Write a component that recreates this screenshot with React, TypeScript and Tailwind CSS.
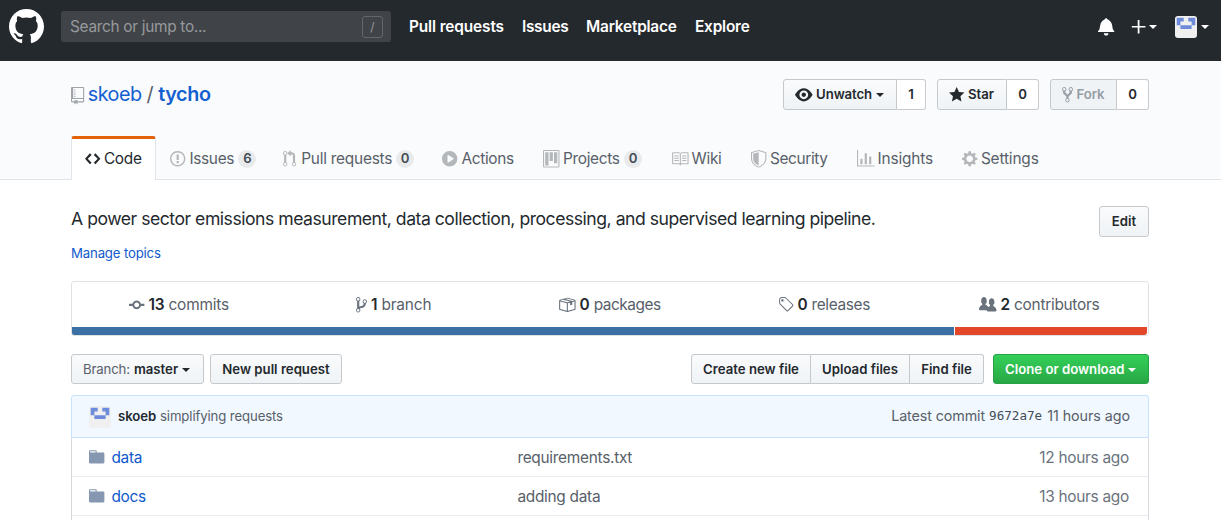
import type { ReactNode } from "react";

const ICONS = {
  mark: { w: 16, d: "M8 0C3.58 0 0 3.58 0 8c0 3.54 2.29 6.53 5.47 7.59.4.07.55-.17.55-.38 0-.19-.01-.82-.01-1.49-2.01.37-2.53-.49-2.69-.94-.09-.23-.48-.94-.82-1.13-.28-.15-.68-.52-.01-.53.63-.01 1.08.58 1.23.82.72 1.21 1.87.87 2.33.66.07-.52.28-.87.51-1.07-1.78-.2-3.64-.89-3.64-3.95 0-.87.31-1.59.82-2.15-.08-.2-.36-1.02.08-2.12 0 0 .67-.21 2.2.82.64-.18 1.32-.27 2-.27.68 0 1.36.09 2 .27 1.53-1.04 2.2-.82 2.2-.82.44 1.1.16 1.92.08 2.12.51.56.82 1.27.82 2.15 0 3.07-1.87 3.75-3.65 3.95.29.25.54.73.54 1.48 0 1.07-.01 1.93-.01 2.2 0 .21.15.46.55.38A8.013 8.013 0 0016 8c0-4.42-3.58-8-8-8z" },
  repo: { w: 12, d: "M4 9H3V8h1v1zm0-3H3v1h1V6zm0-2H3v1h1V4zm0-2H3v1h1V2zm8-1v12c0 .55-.45 1-1 1H6v2l-1.5-1.5L3 16v-2H1c-.55 0-1-.45-1-1V1c0-.55.45-1 1-1h10c.55 0 1 .45 1 1zm-1 10H1v2h2v-1h3v1h5v-2zm0-10H2v9h9V1z" },
  eye: { w: 16, d: "M8.06 2C3 2 0 8 0 8s3 6 8.06 6C13 14 16 8 16 8s-3-6-7.94-6zM8 12c-2.2 0-4-1.78-4-4 0-2.2 1.8-4 4-4 2.22 0 4 1.8 4 4 0 2.22-1.78 4-4 4zm2-4c0 1.11-.89 2-2 2-1.11 0-2-.89-2-2 0-1.11.89-2 2-2 1.11 0 2 .89 2 2z" },
  star: { w: 14, d: "M14 6l-4.9-.64L7 1 4.9 5.36 0 6l3.6 3.26L2.67 14 7 11.67 11.33 14l-.93-4.74L14 6z" },
  fork: { w: 10, d: "M8 1a1.993 1.993 0 00-1 3.72V6L5 8 3 6V4.72A1.993 1.993 0 002 1a1.993 1.993 0 00-1 3.72V6.5l3 3v1.78A1.993 1.993 0 005 15a1.993 1.993 0 001-3.72V9.5l3-3V4.72A1.993 1.993 0 008 1zM2 4.2C1.34 4.2.8 3.65.8 3c0-.65.55-1.2 1.2-1.2.65 0 1.2.55 1.2 1.2 0 .65-.55 1.2-1.2 1.2zm3 10c-.66 0-1.2-.55-1.2-1.2 0-.65.55-1.2 1.2-1.2.65 0 1.2.55 1.2 1.2 0 .65-.55 1.2-1.2 1.2zm3-10c-.66 0-1.2-.55-1.2-1.2 0-.65.55-1.2 1.2-1.2.65 0 1.2.55 1.2 1.2 0 .65-.55 1.2-1.2 1.2z" },
  code: { w: 14, d: "M9.5 3L8 4.5 11.5 8 8 11.5 9.5 13 14 8 9.5 3zm-5 0L0 8l4.5 5L6 11.5 2.5 8 6 4.5 4.5 3z" },
  issue: { w: 14, d: "M7 2.3c3.14 0 5.7 2.56 5.7 5.7s-2.56 5.7-5.7 5.7A5.71 5.71 0 011.3 8c0-3.14 2.56-5.7 5.7-5.7zM7 1C3.14 1 0 4.14 0 8s3.14 7 7 7 7-3.14 7-7-3.14-7-7-7zm1 3H6v5h2V4zm0 6H6v2h2v-2z" },
  pull: { w: 12, d: "M11 11.28V5c-.03-.78-.34-1.47-.94-2.06C9.46 2.35 8.78 2.03 8 2H7V0L4 3l3 3V4h1c.27.02.48.11.69.31.21.2.3.42.31.69v6.28A1.993 1.993 0 0010 15a1.993 1.993 0 001-3.72zm-1 2.92c-.66 0-1.2-.55-1.2-1.2 0-.65.55-1.2 1.2-1.2.65 0 1.2.55 1.2 1.2 0 .65-.55 1.2-1.2 1.2zM4 3c0-1.11-.89-2-2-2a1.993 1.993 0 00-1 3.72v6.56A1.993 1.993 0 002 15a1.993 1.993 0 001-3.72V4.72c.59-.34 1-.98 1-1.72zm-.8 10c0 .66-.55 1.2-1.2 1.2-.65 0-1.2-.55-1.2-1.2 0-.65.55-1.2 1.2-1.2.65 0 1.2.55 1.2 1.2zM2 4.2C1.34 4.2.8 3.65.8 3c0-.65.55-1.2 1.2-1.2.65 0 1.2.55 1.2 1.2 0 .65-.55 1.2-1.2 1.2z" },
  play: { w: 14, d: "M14 8A7 7 0 110 8a7 7 0 0114 0zm-8.223 3.482l4.599-3.066a.5.5 0 000-.832L5.777 4.518A.5.5 0 005 4.934v6.132a.5.5 0 00.777.416z" },
  project: { w: 15, d: "M10 12h3V2h-3v10zm-4-2h3V2H6v8zm-4 4h3V2H2v12zm-1 1h13V1H1v14zM14 0H1a1 1 0 00-1 1v14a1 1 0 001 1h13a1 1 0 001-1V1a1 1 0 00-1-1z" },
  book: { w: 16, d: "M3 5h4v1H3V5zm0 3h4V7H3v1zm0 2h4V9H3v1zm11-5h-4v1h4V5zm0 2h-4v1h4V7zm0 2h-4v1h4V9zm2-6v9c0 .55-.45 1-1 1H9.5l-1 1-1-1H2c-.55 0-1-.45-1-1V3c0-.55.45-1 1-1h5.5l1 1 1-1H15c.55 0 1 .45 1 1zm-8 .5L7.5 3H2v9h6V3.5zm7-.5H9.5l-.5.5V12h6V3z" },
  shield: { w: 14, d: "M0 2l7-2 7 2v6.02C14 12.69 8.69 16 7 16c-1.69 0-7-3.31-7-7.98V2zm1 .75L7 1l6 1.75v5.268C13 12.104 8.449 15 7 15c-1.449 0-6-2.896-6-6.982V2.75zm1 .75L7 2v12c-1.207 0-5-2.482-5-5.985V3.5z" },
  graph: { w: 16, d: "M16 14v1H0V0h1v14h15zM5 13H3V8h2v5zm4 0H7V3h2v10zm4 0h-2V6h2v7z" },
  gear: { w: 14, d: "M14 8.77v-1.6l-1.94-.64-.45-1.09.88-1.84-1.13-1.13-1.81.91-1.09-.45-.69-1.92h-1.6l-.63 1.94-1.11.45-1.84-.88-1.13 1.13.91 1.81-.45 1.09L0 7.23v1.59l1.94.64.45 1.09-.88 1.84 1.13 1.13 1.81-.91 1.09.45.69 1.92h1.59l.63-1.94 1.11-.45 1.84.88 1.13-1.13-.92-1.81.47-1.09L14 8.75v.02zM7 11c-1.66 0-3-1.34-3-3s1.34-3 3-3 3 1.34 3 3-1.34 3-3 3z" },
  commit: { w: 14, d: "M10.86 7c-.45-1.72-2-3-3.86-3-1.86 0-3.41 1.28-3.86 3H0v2h3.14c.45 1.72 2 3 3.86 3 1.86 0 3.41-1.28 3.86-3H14V7h-3.14zM7 10.2c-1.22 0-2.2-.98-2.2-2.2 0-1.22.98-2.2 2.2-2.2 1.22 0 2.2.98 2.2 2.2 0 1.22-.98 2.2-2.2 2.2z" },
  branch: { w: 10, d: "M10 5c0-1.11-.89-2-2-2a1.993 1.993 0 00-1 3.72v.3c-.02.52-.23.98-.63 1.38-.4.4-.86.61-1.38.63-.83.02-1.48.16-2 .45V4.72a1.993 1.993 0 00-1-3.72C.88 1 0 1.89 0 3a2 2 0 001 1.72v6.56c-.59.35-1 .99-1 1.72 0 1.11.89 2 2 2 1.11 0 2-.89 2-2 0-.53-.2-1-.53-1.36.09-.06.48-.41.59-.47.25-.11.56-.17.94-.17 1.05-.05 1.95-.45 2.75-1.25S8.95 7.77 9 6.73h-.02C9.59 6.37 10 5.73 10 5zM2 1.8c.66 0 1.2.55 1.2 1.2 0 .65-.55 1.2-1.2 1.2C1.35 4.2.8 3.65.8 3c0-.65.55-1.2 1.2-1.2zm0 12.41c-.66 0-1.2-.55-1.2-1.2 0-.65.55-1.2 1.2-1.2.65 0 1.2.55 1.2 1.2 0 .65-.55 1.2-1.2 1.2zm6-8c-.66 0-1.2-.55-1.2-1.2 0-.65.55-1.2 1.2-1.2.65 0 1.2.55 1.2 1.2 0 .65-.55 1.2-1.2 1.2z" },
  package: { w: 16, d: "M1 4.27v7.47c0 .45.3.84.75.97l6.5 1.73c.16.05.34.05.5 0l6.5-1.73c.45-.13.75-.52.75-.97V4.27c0-.45-.3-.84-.75-.97l-6.5-1.74a1.4 1.4 0 00-.5 0L1.75 3.3c-.45.13-.75.52-.75.97zm7 9.09l-6-1.59V5l6 1.61v6.75zM2 4l2.5-.67L11 5.06l-2.5.67L2 4zm13 7.77l-6 1.59V6.61l2-.55V8.5l2-.53V5.53L15 5v6.77zm-2-7.24L6.5 2.8l2-.53L15 4l-2 .53z" },
  tag: { w: 14, d: "M7.73 1.73C7.26 1.26 6.62 1 5.96 1H3.5C2.13 1 1 2.13 1 3.5v2.47c0 .66.27 1.3.73 1.77l6.06 6.06c.39.39 1.02.39 1.41 0l4.59-4.59a.996.996 0 000-1.41L7.73 1.73zM2.38 7.09c-.31-.3-.47-.7-.47-1.13V3.5c0-.88.72-1.59 1.59-1.59h2.47c.42 0 .83.16 1.13.47l6.14 6.13-4.73 4.73-6.13-6.15zM3.01 3h2v2H3V3h.01z" },
  people: { w: 16, d: "M16 12.999c0 .439-.45 1-1 1H7.995c-.539 0-.994-.447-.995-.999H1c-.54 0-1-.561-1-1 0-2.634 3-4 3-4s.229-.409 0-1c-.841-.621-1.058-.59-1-3 .058-2.419 1.367-3 2.5-3s2.442.58 2.5 3c.058 2.41-.159 2.379-1 3-.229.59 0 1 0 1s1.549.711 2.42 2.088C9.196 9.369 10 8.999 10 8.999s.229-.409 0-1c-.841-.62-1.058-.59-1-3 .058-2.419 1.367-3 2.5-3s2.437.581 2.495 3c.059 2.41-.158 2.38-1 3-.229.59 0 1 0 1s3.005 1.366 3.005 4z" },
  bell: { w: 14, d: "M14 12v1H0v-1l.73-.58c.77-.77.81-2.55 1.19-4.42C2.69 3.23 6 2 6 2c0-.55.45-1 1-1s1 .45 1 1c0 0 3.39 1.23 4.16 5 .38 1.88.42 3.66 1.19 4.42l.66.58H14zm-7 4c1.11 0 2-.89 2-2H5c0 1.11.89 2 2 2z" },
  plus: { w: 12, d: "M12.2 8.75H6.8v5.45H5.2V8.75H-.2v-1.5h5.4V1.8h1.6v5.45h5.4z" },
  folder: { w: 14, d: "M13 4H7V3c0-.66-.31-1-1-1H1c-.55 0-1 .45-1 1v10c0 .55.45 1 1 1h12c.55 0 1-.45 1-1V5c0-.55-.45-1-1-1zM6 4H1V3h5v1z" },
};

type IconName = keyof typeof ICONS;

function Icon({ name, size = 17.6, className = "" }: { name: IconName; size?: number; className?: string }) {
  const { w, d } = ICONS[name];
  return (
    <svg width={(w * size) / 16} height={size} viewBox={`0 0 ${w} 16`} fill="currentColor" className={`shrink-0 overflow-visible ${className}`} aria-hidden="true">
      <path fillRule="evenodd" d={d} />
    </svg>
  );
}

function Caret({ className = "" }: { className?: string }) {
  return <span className={`shrink-0 border-x-[4.4px] border-t-[4.4px] border-x-transparent border-t-current ${className}`} />;
}

function Avatar() {
  return (
    <svg width="22" height="22" viewBox="0 0 22 22" className="shrink-0 rounded-[3px]" aria-hidden="true">
      <path fill="#f0f0f0" d="M0 0h22v22H0z" />
      <path fill="#6e8bdb" d="M1.7 1.8h7v3.8H5.4v3.6H1.7zM13.3 1.8h7v7.4h-3.7V5.6h-3.3zM5.4 9.2h11.2v3.7H5.4z" />
    </svg>
  );
}

const BTN = "flex items-center whitespace-nowrap border border-[#c6c9cc] bg-gradient-to-b from-[#fafbfc] to-[#eff3f6] text-[13.2px] font-semibold";

function Social({ icon, label, count, width, countWidth, caret, disabled, tracking }: { icon: IconName; label: string; count: string; width: string; countWidth: string; caret?: boolean; disabled?: boolean; tracking: string }) {
  return (
    <div className="flex h-[31px]">
      <div className={`${BTN} rounded-l-[3px] pl-[11px] ${width} ${disabled ? "!bg-none !bg-[#eff3f6] text-[#959da5]" : ""}`}>
        <Icon name={icon} />
        <span className={`ml-[3.5px] ${tracking}`}>{label}</span>
        {caret && <Caret className="ml-[4px]" />}
      </div>
      <div className={`flex items-center justify-center rounded-r-[3px] border border-l-0 border-[#c9cbce] bg-white text-[13.2px] font-semibold ${countWidth}`}>{count}</div>
    </div>
  );
}

interface TabProps {
  icon: IconName;
  label: string;
  count?: string;
  width: string;
  gap: string;
  tracking: string;
  textWidth?: string;
}

const TABS: TabProps[] = [
  { icon: "issue", label: "Issues", count: "6", width: "w-[113px]", gap: "ml-[4px]", tracking: "tracking-[-0.3px]", textWidth: "w-[49px]" },
  { icon: "pull", label: "Pull requests", count: "0", width: "w-[159px]", gap: "ml-[5px]", tracking: "tracking-[-0.22px]", textWidth: "w-[95px]" },
  { icon: "play", label: "Actions", width: "w-[101px]", gap: "ml-[4px]", tracking: "tracking-[-0.3px]" },
  { icon: "project", label: "Projects", count: "0", width: "w-[128px]", gap: "ml-[3.5px]", tracking: "tracking-[-0.3px]", textWidth: "w-[61px]" },
  { icon: "book", label: "Wiki", width: "w-[80px]", gap: "ml-[3px]", tracking: "tracking-[-0.3px]" },
  { icon: "shield", label: "Security", width: "w-[106px]", gap: "ml-[3.5px]", tracking: "tracking-[-0.35px]" },
  { icon: "graph", label: "Insights", width: "w-[105px]", gap: "ml-[3px]", tracking: "tracking-[-0.15px]" },
  { icon: "gear", label: "Settings", width: "w-[90px]", gap: "ml-[3.5px]", tracking: "tracking-[-0.15px]" },
];

function Tab({ icon, label, count, width, gap, tracking, textWidth = "" }: TabProps) {
  return (
    <div className={`flex shrink-0 items-center whitespace-nowrap text-[15.4px] text-[#586069] ${width}`}>
      <Icon name={icon} className="text-[#b4b7ba]" />
      <span className={`${gap} ${tracking} ${textWidth}`}>{label}</span>
      {count && (
        <span className="flex h-[18px] w-[18px] items-center justify-center rounded-full bg-[#e9eaec] text-[13.2px] font-semibold text-[#444d56]">{count}</span>
      )}
    </div>
  );
}

function Stat({ icon, count, label, width, tracking }: { icon: IconName; count: string; label: string; width: string; tracking: string }) {
  return (
    <div className={`flex shrink-0 items-center whitespace-nowrap text-[15.4px] text-[#586069] ${width}`}>
      <Icon name={icon} className="text-[#6a737d]" />
      <span className="ml-1 tracking-[-0.1px] font-semibold text-[#24292e]">{count}</span>
      <span className={`ml-1 ${tracking}`}>{label}</span>
    </div>
  );
}

function Row({ name, message, age }: { name: string; message: string; age: string }) {
  return (
    <div className="flex h-[39px] items-center whitespace-nowrap border-b border-[#eaecef] pl-[17px] pr-[19px] text-[15.4px] tracking-[-0.27px] text-[#586069]">
      <Icon name="folder" className="text-[#8698b1]" />
      <span className="ml-[7px] w-[406px] pt-[2px] text-[#0f5acb]">{name}</span>
      <span className="flex-1 pt-[2px]">{message}</span>
      <span className="pt-[2px] text-[#6a737d]">{age}</span>
    </div>
  );
}

function NavLink({ children, className }: { children: ReactNode; className: string }) {
  return <span className={`shrink-0 whitespace-nowrap text-[15.4px] font-semibold text-white ${className}`}>{children}</span>;
}

export default function App() {
  return (
    <div className="h-[520px] w-[1221px] overflow-hidden bg-white font-['Inter','Liberation_Sans',sans-serif] text-[#24292e]">
      <header className="flex h-[61px] items-start bg-[#24292e] pl-[9px]">
        <div className="flex h-[53px] w-full items-center">
          <Icon name="mark" size={35} className="text-white" />
          <div className="ml-[17px] flex h-[31px] w-[330px] shrink-0 items-center justify-between rounded-[3px] bg-[#404448] pl-[9px] pr-2">
            <span className="text-[15.4px] tracking-[-0.3px] text-[#97999c]">Search or jump to...</span>
            <span className="flex h-[22px] w-[21px] items-center justify-center rounded-[3px] border border-[#63676b] text-[12px] text-[#94979a]">/</span>
          </div>
          <nav className="ml-[18px] flex w-[689px] shrink-0">
            <NavLink className="w-[113px] tracking-[-0.12px]">Pull requests</NavLink>
            <NavLink className="w-[64px] tracking-[-0.3px]">Issues</NavLink>
            <NavLink className="w-[109px] tracking-[-0.2px]">Marketplace</NavLink>
            <NavLink className="tracking-[-0.2px]">Explore</NavLink>
          </nav>
          <div className="flex items-center text-white">
            <Icon name="bell" size={18.6} />
            <Icon name="plus" className="ml-[18px]" />
            <Caret className="ml-[4px]" />
            <span className="ml-[18px]"><Avatar /></span>
            <Caret className="ml-[4px]" />
          </div>
        </div>
      </header>

      <section className="h-[119px] border-b border-[#e1e4e8] bg-[#fafbfc] pl-[71px]">
        <div className="flex h-[75px] w-[1078px] items-start justify-between pt-[18px]">
          <div className="flex h-[31px] items-center whitespace-nowrap text-[19.8px] text-[#1460d0]">
            <Icon name="repo" className="mt-[3px] text-[#a0a5ab]" />
            <span className="ml-[3.5px] tracking-[-0.5px]">skoeb</span>
            <span className="ml-[5px] mr-[4.5px] text-[#586069]">/</span>
            <span className="font-semibold tracking-[-0.4px]">tycho</span>
          </div>
          <div className="flex gap-[11px]">
            <Social icon="eye" label="Unwatch" count="1" width="w-[114px]" countWidth="w-[29px]" caret tracking="tracking-[-0.1px]" />
            <Social icon="star" label="Star" count="0" width="w-[70px]" countWidth="w-[32px]" tracking="tracking-[0px]" />
            <Social icon="fork" label="Fork" count="0" width="w-[67px]" countWidth="w-[32px]" disabled tracking="tracking-[-0.1px]" />
          </div>
        </div>
        <div className="flex h-[44px] w-[1078px]">
          <div className="flex h-[44px] w-[85px] shrink-0 items-center rounded-t-[3px] border-x border-t-[3px] border-x-[#e1e4e8] border-t-[#e36209] bg-white pb-[1px] pl-[12.5px] text-[15.4px]">
            <Icon name="code" />
            <span className="ml-[4px] tracking-[-0.3px]">Code</span>
          </div>
          <div className="flex h-[44px] items-center pl-[14px] pt-[2px]">
            {TABS.map((tab) => <Tab key={tab.label} {...tab} />)}
          </div>
        </div>
      </section>

      <main className="ml-[71px] w-[1078px]">
        <div className="flex h-[101px] justify-between pt-[26px]">
          <div className="whitespace-nowrap">
            <p className="h-[26px] text-[17.6px] leading-[26px] tracking-[-0.48px]">A power sector emissions measurement, data collection, processing, and supervised learning pipeline.</p>
            <p className="mt-[11px] text-[13.2px] leading-[20px] tracking-[-0.16px] text-[#0f5acb]">Manage topics</p>
          </div>
          <div className={`${BTN} h-[31px] w-[50px] justify-center rounded-[3px] pt-[1px]`}>Edit</div>
        </div>

        <div className="h-[55px] overflow-hidden rounded-[3px] border border-[#dfe2e5]">
          <div className="flex h-[45px] items-center pl-[57px]">
            <Stat icon="commit" count="13" label="commits" width="w-[227px]" tracking="tracking-[-0.18px]" />
            <Stat icon="branch" count="1" label="branch" width="w-[202px]" tracking="tracking-[-0.15px]" />
            <Stat icon="package" count="0" label="packages" width="w-[220px]" tracking="tracking-[-0.45px]" />
            <Stat icon="tag" count="0" label="releases" width="w-[201px]" tracking="tracking-[-0.33px]" />
            <Stat icon="people" count="2" label="contributors" width="w-[130px]" tracking="tracking-[-0.27px]" />
          </div>
          <div className="flex h-2 gap-px pr-px">
            <div className="w-[882px] bg-[#3a70a4]" />
            <div className="flex-1 rounded-br-[3px] bg-[#e24729]" />
          </div>
        </div>

        <div className="mt-[18px] flex h-[30px]">
          <div className={`${BTN} w-[133px] rounded-[3px] pl-[11px] pt-[1px]`}>
            <span className="font-normal tracking-[-0.15px] text-[#586069]">Branch:</span>
            <span className="ml-[4px] tracking-[0px]">master</span>
            <Caret className="ml-[4px]" />
          </div>
          <div className={`${BTN} ml-[6px] w-[132px] justify-center rounded-[3px] pt-[1px]`}>New pull request</div>
          <div className={`${BTN} ml-auto w-[120px] justify-center rounded-l-[3px] pt-[1px]`}>Create new file</div>
          <div className={`${BTN} w-[99px] justify-center border-l-0 pt-[1px]`}>Upload files</div>
          <div className={`${BTN} w-[74px] justify-center rounded-r-[3px] border-l-0 pt-[1px]`}>Find file</div>
          <div className="ml-[9px] flex w-[156px] items-center whitespace-nowrap rounded-[3px] border border-[#28a046] bg-gradient-to-b from-[#34d058] to-[#28a745] pl-[11px] pt-[1px] text-[13.2px] font-semibold text-white">
            <span>Clone or download</span>
            <Caret className="ml-[3px]" />
          </div>
        </div>

        <div className="mt-[11px] flex h-[43px] items-center whitespace-nowrap rounded-t-[3px] border border-[#c8e1ff] bg-[#f1f8ff] pl-[17px] pr-[18px] text-[#586069]">
          <Avatar />
          <span className="ml-[7px] text-[13.2px] font-semibold tracking-[-0.1px] text-[#24292e]">skoeb</span>
          <span className="ml-1 flex-1 text-[13.2px] tracking-[-0.12px]">simplifying requests</span>
          <span className="pb-[2px] text-[14.3px] tracking-[-0.1px]">Latest commit</span>
          <span className="ml-[4px] font-['DejaVu_Sans_Mono',monospace] text-[12.6px] text-[#444d56]">9672a7e</span>
          <span className="ml-[5px] pb-[2px] text-[14.3px] tracking-[-0.05px]">11 hours ago</span>
        </div>
        <div className="border-x border-[#d5d9dd]">
          <Row name="data" message="requirements.txt" age="12 hours ago" />
          <Row name="docs" message="adding data" age="13 hours ago" />
          <div className="h-[10px]" />
        </div>
      </main>
    </div>
  );
}
